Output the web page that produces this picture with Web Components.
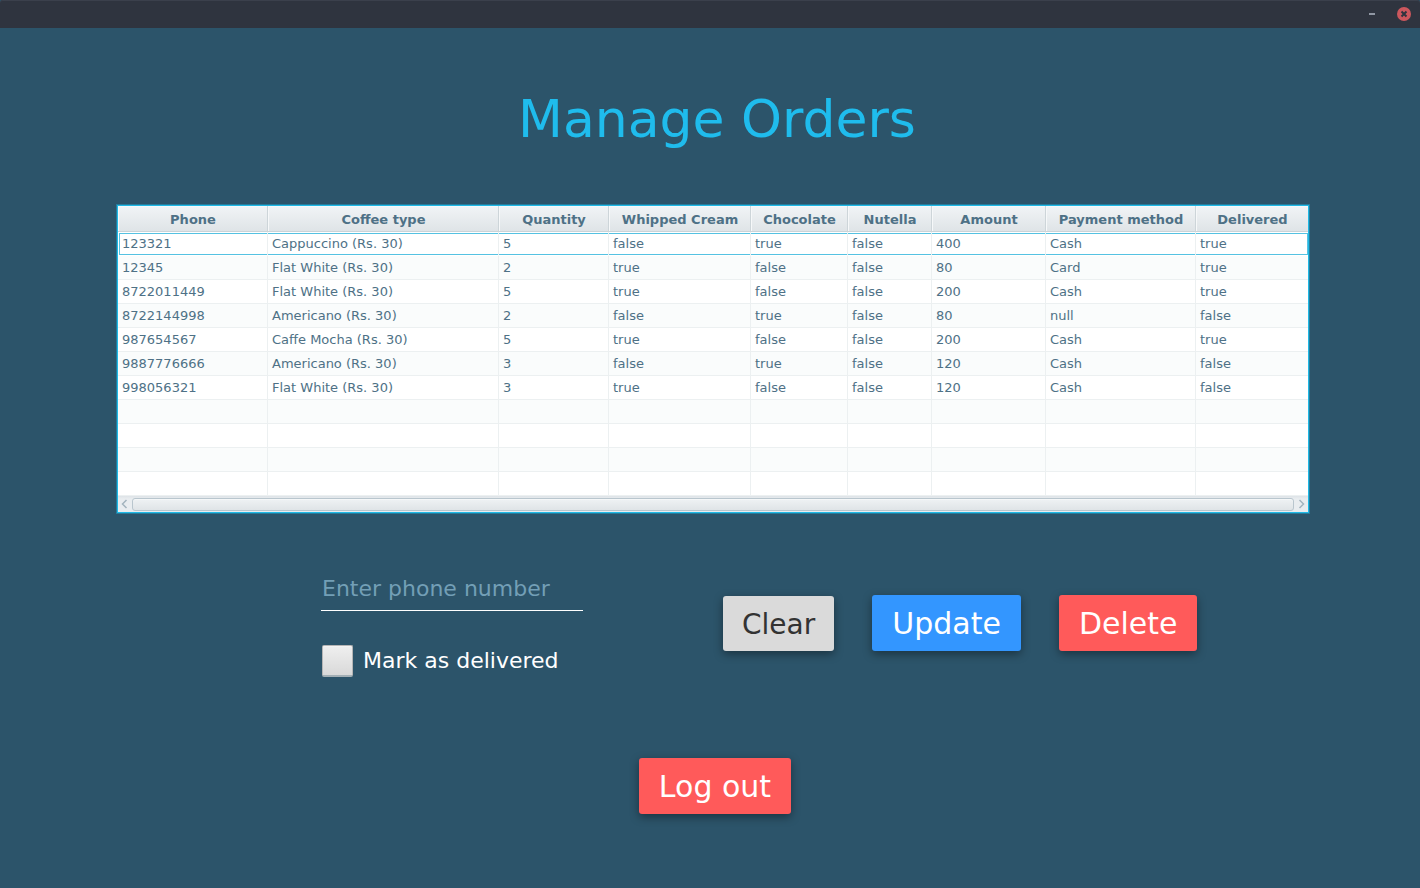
<!DOCTYPE html>
<html lang="en">
<head>
<meta charset="utf-8">
<title>Manage Orders</title>
<style>
  html, body { margin: 0; min-height: 100%; }
  body { background: #2c546a; font-family: "DejaVu Sans", sans-serif; color: #fff; }
</style>
</head>
<body>
<manage-orders></manage-orders>

<script>
const define = (name, html, setup) => {
  const template = document.createElement('template');
  template.innerHTML = html;
  customElements.define(name, class extends HTMLElement {
    constructor() {
      super();
      this.attachShadow({ mode: 'open' }).append(template.content.cloneNode(true));
    }
    connectedCallback() {
      if (setup && !this.ready) { this.ready = true; setup(this, this.shadowRoot); }
    }
  });
};

define('window-bar', `
  <style>
    :host { display: flex; align-items: center; justify-content: flex-end; gap: 16px; height: 28px;
      padding-right: 8px; box-sizing: border-box; background: #2f343f; box-shadow: inset 0 1px #3b404c;
      border-radius: 3px 3px 0 0; }
    button { display: block; width: 16px; height: 16px; padding: 0; border: 0; background: none; }
    svg { display: block; }
  </style>
  <button type="button" aria-label="Minimize"><svg width="16" height="16"><rect x="5" y="7" width="6" height="2" fill="#9097a3"/></svg></button>
  <button type="button" aria-label="Close"><svg width="16" height="16"><circle cx="8" cy="8" r="7" fill="#cc575d"/><path d="M5.5 5.5l5 5M10.5 5.5l-5 5" stroke="#2f343f" stroke-width="2"/></svg></button>
`);

define('action-button', `
  <style>
    :host { display: block; }
    button { display: block; box-sizing: border-box; height: 56px; padding: 2px 20px 0; border: 0; border-radius: 3px;
      color: #fff; background: #ff5a5a; font: 30px/54px "DejaVu Sans", sans-serif; white-space: nowrap;
      box-shadow: 0 3px 10px rgba(0, 0, 0, .4); }
    :host([kind="primary"]) button { background: #3396ff; }
    :host([kind="plain"]) button { height: 55px; padding: 2px 19px 0; background: #dadada; color: #333; font-size: 28px; }
  </style>
  <button type="button"><slot></slot></button>
`);

define('phone-field', `
  <style>
    :host { display: block; }
    input { display: block; box-sizing: border-box; width: 100%; height: 45px; padding: 0 1px; border: 0;
      border-bottom: 1px solid #fff; border-radius: 0; background: none; color: #fff; outline: 0;
      font: 22px "DejaVu Sans", sans-serif; }
    input::placeholder { color: #739fb6; opacity: 1; }
  </style>
  <input type="text" aria-label="Enter phone number" placeholder="Enter phone number">
`);

define('check-field', `
  <style>
    :host { display: block; }
    label { display: flex; align-items: center; gap: 10px; padding: 0 1px; font-size: 22px; line-height: 32px; white-space: nowrap; }
    input { appearance: none; flex: none; box-sizing: border-box; width: 31px; height: 32px; margin: 0;
      border: 1px solid #b5b5b5; border-bottom: 2px solid #a3afb5; border-radius: 2px;
      background: linear-gradient(#efefef, #d9d9d9); box-shadow: inset 0 1px #f3f3f3; }
    input:checked { background: #3396ff; }
  </style>
  <label><input type="checkbox"><span><slot></slot></span></label>
`);

define('scroll-strip', `
  <style>
    :host { display: flex; align-items: center; height: 16px; box-sizing: border-box; padding: 1px 0 0;
      background: linear-gradient(#dee3e7, #e9edf0 3px, #e9edf0); }
    button { flex: none; width: 14px; height: 15px; padding: 0; border: 0; background: none; }
    svg { display: block; margin: 0 auto 1px; }
    .thumb { flex: 1; box-sizing: border-box; height: 13px; border: 1px solid #b9c6ce; border-radius: 3px;
      background: linear-gradient(#eff2f4, #dfe4e7); box-shadow: inset 0 1px #f5f7f8; }
  </style>
  <button type="button" aria-label="Scroll left"><svg width="12" height="10"><path d="M7.5 1l-4 4 4 4" fill="none" stroke="#a3b4be" stroke-width="1.5"/></svg></button>
  <div class="thumb"></div>
  <button type="button" aria-label="Scroll right"><svg width="12" height="10"><path d="M4.500 1l4 4-4 4" fill="none" stroke="#a3b4be" stroke-width="1.5"/></svg></button>
`);

const columns = [['Phone', 150], ['Coffee type', 231], ['Quantity', 110], ['Whipped Cream', 142],
  ['Chocolate', 97], ['Nutella', 84], ['Amount', 114], ['Payment method', 150], ['Delivered', 0]];
const orders = [
  ['123321', 'Cappuccino (Rs. 30)', '5', 'false', 'true', 'false', '400', 'Cash', 'true'],
  ['12345', 'Flat White (Rs. 30)', '2', 'true', 'false', 'false', '80', 'Card', 'true'],
  ['8722011449', 'Flat White (Rs. 30)', '5', 'true', 'false', 'false', '200', 'Cash', 'true'],
  ['8722144998', 'Americano (Rs. 30)', '2', 'false', 'true', 'false', '80', 'null', 'false'],
  ['987654567', 'Caffe Mocha (Rs. 30)', '5', 'true', 'false', 'false', '200', 'Cash', 'true'],
  ['9887776666', 'Americano (Rs. 30)', '3', 'false', 'true', 'false', '120', 'Cash', 'false'],
  ['998056321', 'Flat White (Rs. 30)', '3', 'true', 'false', 'false', '120', 'Cash', 'false'],
  [], [], [], []
];

define('orders-table', `
  <style>
    :host { display: block; border: 1px solid #1fb9e6; box-shadow: 0 0 0 1px #257b9b; background: #fff; }
    table { width: 100%; table-layout: fixed; border-collapse: separate; border-spacing: 0;
      font-size: 13px; line-height: 16px; color: #4e7186; }
    th, td { box-sizing: border-box; padding: 0 4px; white-space: nowrap; overflow: hidden; }
    th { height: 26px; padding: 2px 4px 0 5px; text-align: center; border-right: 1px solid #cdd5d9;
      border-bottom: 1px solid #cbd3d8; background: linear-gradient(#f1f4f6, #dfe4e7);
      box-shadow: inset 1px 1px #f6f8f9; }
    td { height: 24px; text-align: left; border-right: 1px solid #ecf0f1; border-bottom: 1px solid #ecf0f1; }
    tr > :last-child { border-right: 0; }
    tbody tr:nth-child(even) td { background: #fafcfc; }
    tbody tr:first-child td { --line: linear-gradient(#55c2e2, #55c2e2); border-bottom-color: #fff;
      background: var(--line) 0 1px / 100% 1px no-repeat, var(--line) 0 100% / 100% 1px no-repeat; }
    tbody tr:first-child td:first-child { background: linear-gradient(#fff, #fff) 0 0 / 1px 100% no-repeat,
      var(--line) 0 1px / 100% 1px no-repeat, var(--line) 0 100% / 100% 1px no-repeat,
      var(--line) 1px 1px / 1px 100% no-repeat; }
    tbody tr:first-child td:last-child { background: var(--line) 0 1px / 100% 1px no-repeat,
      var(--line) 0 100% / 100% 1px no-repeat, var(--line) 100% 1px / 1px 100% no-repeat; }
  </style>
  <table><colgroup></colgroup><thead><tr></tr></thead><tbody></tbody></table>
  <scroll-strip></scroll-strip>
`, (host, root) => {
  const group = root.querySelector('colgroup');
  const head = root.querySelector('thead tr');
  for (const [name, width] of columns) {
    const col = document.createElement('col');
    if (width) col.style.width = width + 'px';
    group.append(col);
    const th = document.createElement('th');
    th.scope = 'col';
    th.textContent = name;
    head.append(th);
  }
  const body = root.querySelector('tbody');
  for (const order of orders) {
    const row = body.insertRow();
    columns.forEach((_, i) => { row.insertCell().textContent = order[i] ?? ''; });
  }
});

define('manage-orders', `
  <style>
    :host { display: block; }
    main { padding: 61px 111px 74px 117px; }
    h1 { margin: 0 0 56px; padding-left: 8px; font-size: 52px; line-height: 60px; font-weight: 400;
      text-align: center; color: #1fbced; }
    form { display: flex; flex-wrap: wrap; align-items: flex-start; gap: 140px; margin-top: 53px; padding-left: 204px; }
    .fields { display: grid; gap: 34px; width: 262px; }
    .actions { display: flex; align-items: flex-end; gap: 38px; padding-top: 29px; }
    footer { display: flex; justify-content: center; margin-top: 81px; padding-left: 4px; }
  </style>
  <window-bar></window-bar>
  <main>
    <h1>Manage Orders</h1>
    <orders-table></orders-table>
    <form>
      <div class="fields">
        <phone-field></phone-field>
        <check-field>Mark as delivered</check-field>
      </div>
      <div class="actions">
        <action-button kind="plain">Clear</action-button>
        <action-button kind="primary">Update</action-button>
        <action-button>Delete</action-button>
      </div>
    </form>
    <footer><action-button>Log out</action-button></footer>
  </main>
`);
</script>
</body>
</html>
